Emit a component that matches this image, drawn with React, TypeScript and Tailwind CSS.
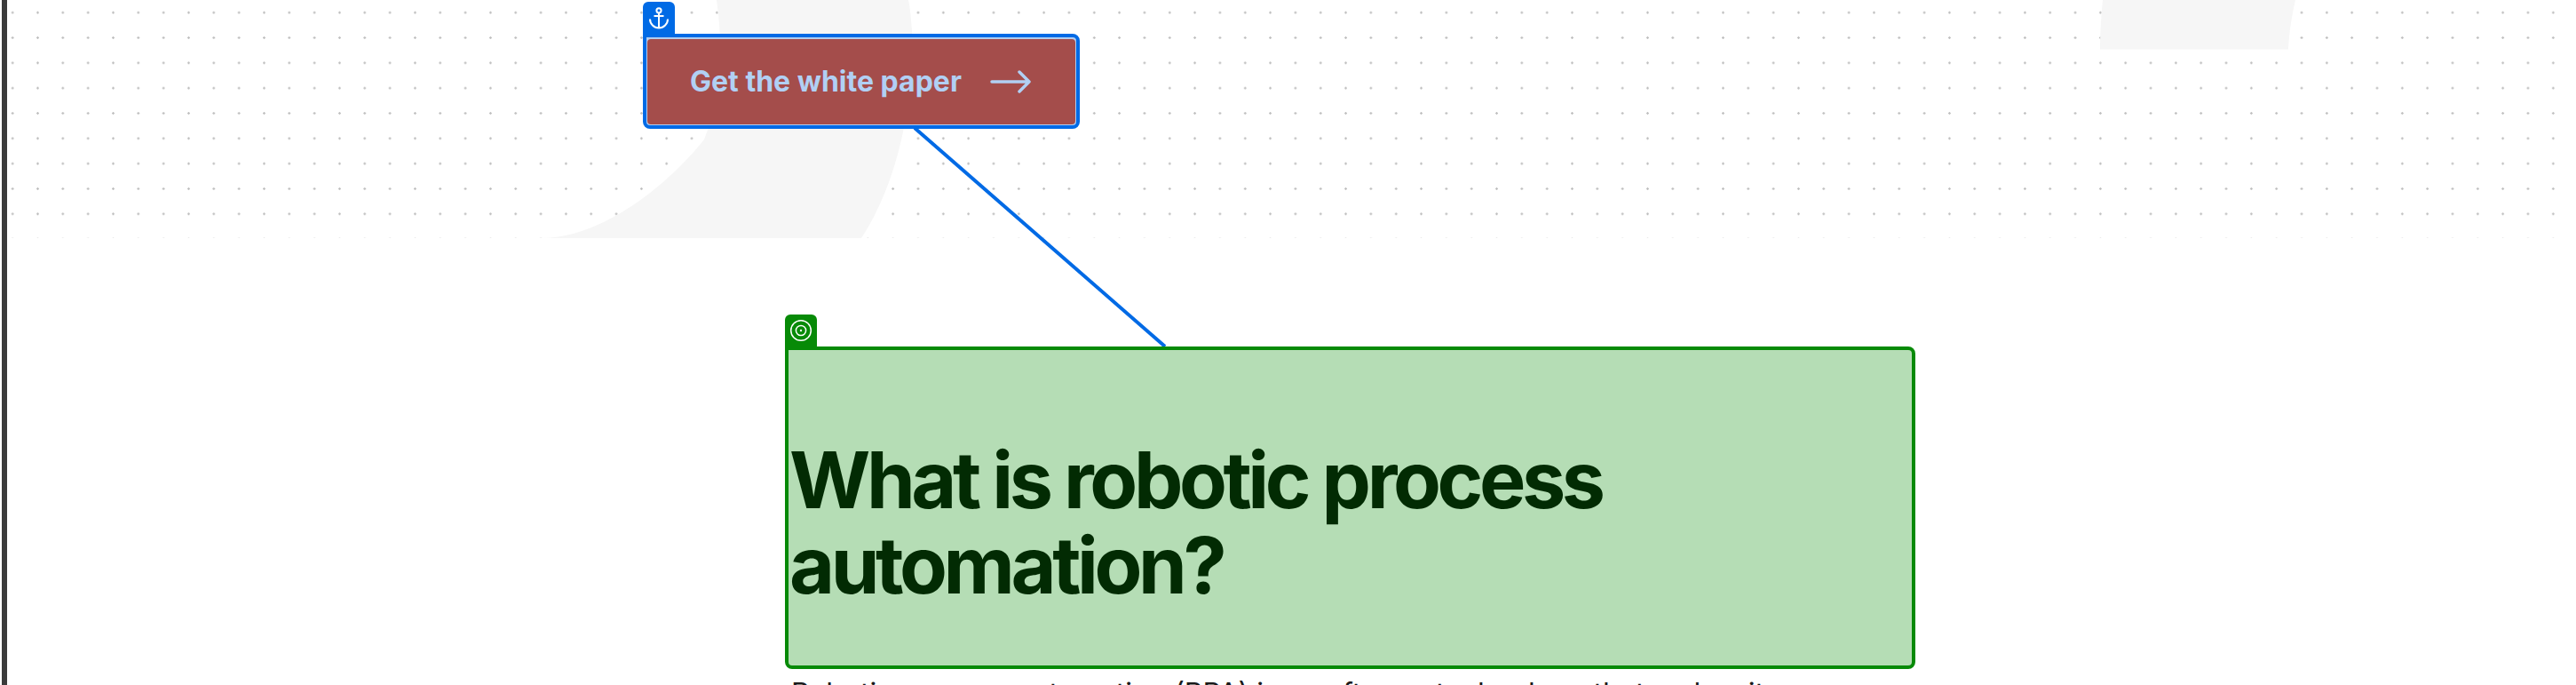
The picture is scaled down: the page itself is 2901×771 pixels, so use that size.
// Annotated page: anchor link pointing at its target heading
export default function App() {
  return (
    <div className="flex h-[771px] overflow-hidden bg-white pl-[2px] font-['Inter',sans-serif]">
      <div className="z-10 w-[6px] shrink-0 bg-[#3b3b3b]"></div>

      <main className="relative flex flex-1 flex-col items-start pl-[716px] pt-[2px]">
        {/* dotted backdrop with the grey quote marks on top */}
        <div className="absolute -left-[8px] top-0 h-[268px] w-[2901px] bg-[radial-gradient(#c0c0c0_1px,transparent_1.5px)] bg-[size:28.33px_28.33px]">
          <svg className="h-full w-full" viewBox="0 0 2901 268" fill="#f6f6f6">
            <path d="M807 0C815 55 812 110 793 157C755 205 680 268 610 268L970 268C1012 205 1030 110 1027 35C1026 20 1025 10 1023 0Z" />
            <path d="M2368 0C2366 20 2365 38 2365 55.5L2577 55.5C2578 35 2581 18 2585 0Z" />
          </svg>
        </div>

        {/* connector from anchor to target */}
        <svg className="absolute -left-[8px] top-0 h-[400px] w-[1400px]" viewBox="0 0 1400 400" fill="none">
          <path d="M1030 144L1312 390" stroke="#006ae5" strokeWidth="4" />
        </svg>

        <div className="relative flex w-[492px] flex-col items-start">
          <div className="flex h-[36px] w-[36px] items-center justify-center rounded-t-[6px] bg-[#006ae5]">
            <svg width="22" height="25" viewBox="0 0 22 25" fill="none" stroke="white" strokeWidth="2">
              <circle cx="11" cy="3.8" r="2.6" />
              <path d="M11 6.5V23.5M5.5 10H16.5M1 13.5A10 10 0 0 0 21 13.5" />
            </svg>
          </div>
          <div className="w-full rounded-[8px] rounded-tl-none border-4 border-[#006ae5] bg-[#b2cdf0] px-px pb-px pt-[2px]">
            <a className="flex h-[96px] items-center rounded-[4px] bg-[#a44d4b] pl-[48px] text-[32px] font-bold text-[#b1d0f4]">
              Get the white paper
              <svg className="ml-[32px]" width="46" height="26" viewBox="0 0 46 26" fill="none" stroke="#b1d0f4" strokeWidth="3.5" strokeLinecap="round" strokeLinejoin="round">
                <path d="M2 13H44M33 2L44 13L33 24" />
              </svg>
            </a>
          </div>
        </div>

        <div className="relative ml-[160px] mt-[209px] flex w-[1273px] flex-col items-start">
          <div className="flex h-[36px] w-[36px] items-center justify-center rounded-t-[6px] bg-[#078a07]">
            <svg width="26" height="26" viewBox="0 0 26 26" fill="none" stroke="white" strokeWidth="1.5">
              <circle cx="13" cy="13" r="11.3" />
              <circle cx="13" cy="13" r="5.6" />
              <circle cx="13" cy="13" r="1.2" fill="white" stroke="none" />
            </svg>
          </div>
          <h1 className="flex h-[363px] w-full flex-col justify-end rounded-[8px] rounded-tl-none border-4 border-[#078a07] bg-[#b5ddb5] pb-[65px] pl-px text-[88px] font-bold leading-[96px] tracking-[-0.05em] text-[#022b03]">
            What is robotic process automation?
          </h1>
        </div>

        <p className="ml-[160px] mt-[4px] w-[1120px] pl-[7px] text-[32px] leading-[48px] text-[#1a1a1a]">
          Robotic process automation (RPA) is a software technology that makes it easy to build, deploy, and manage software robots
        </p>
      </main>
    </div>
  )
}
